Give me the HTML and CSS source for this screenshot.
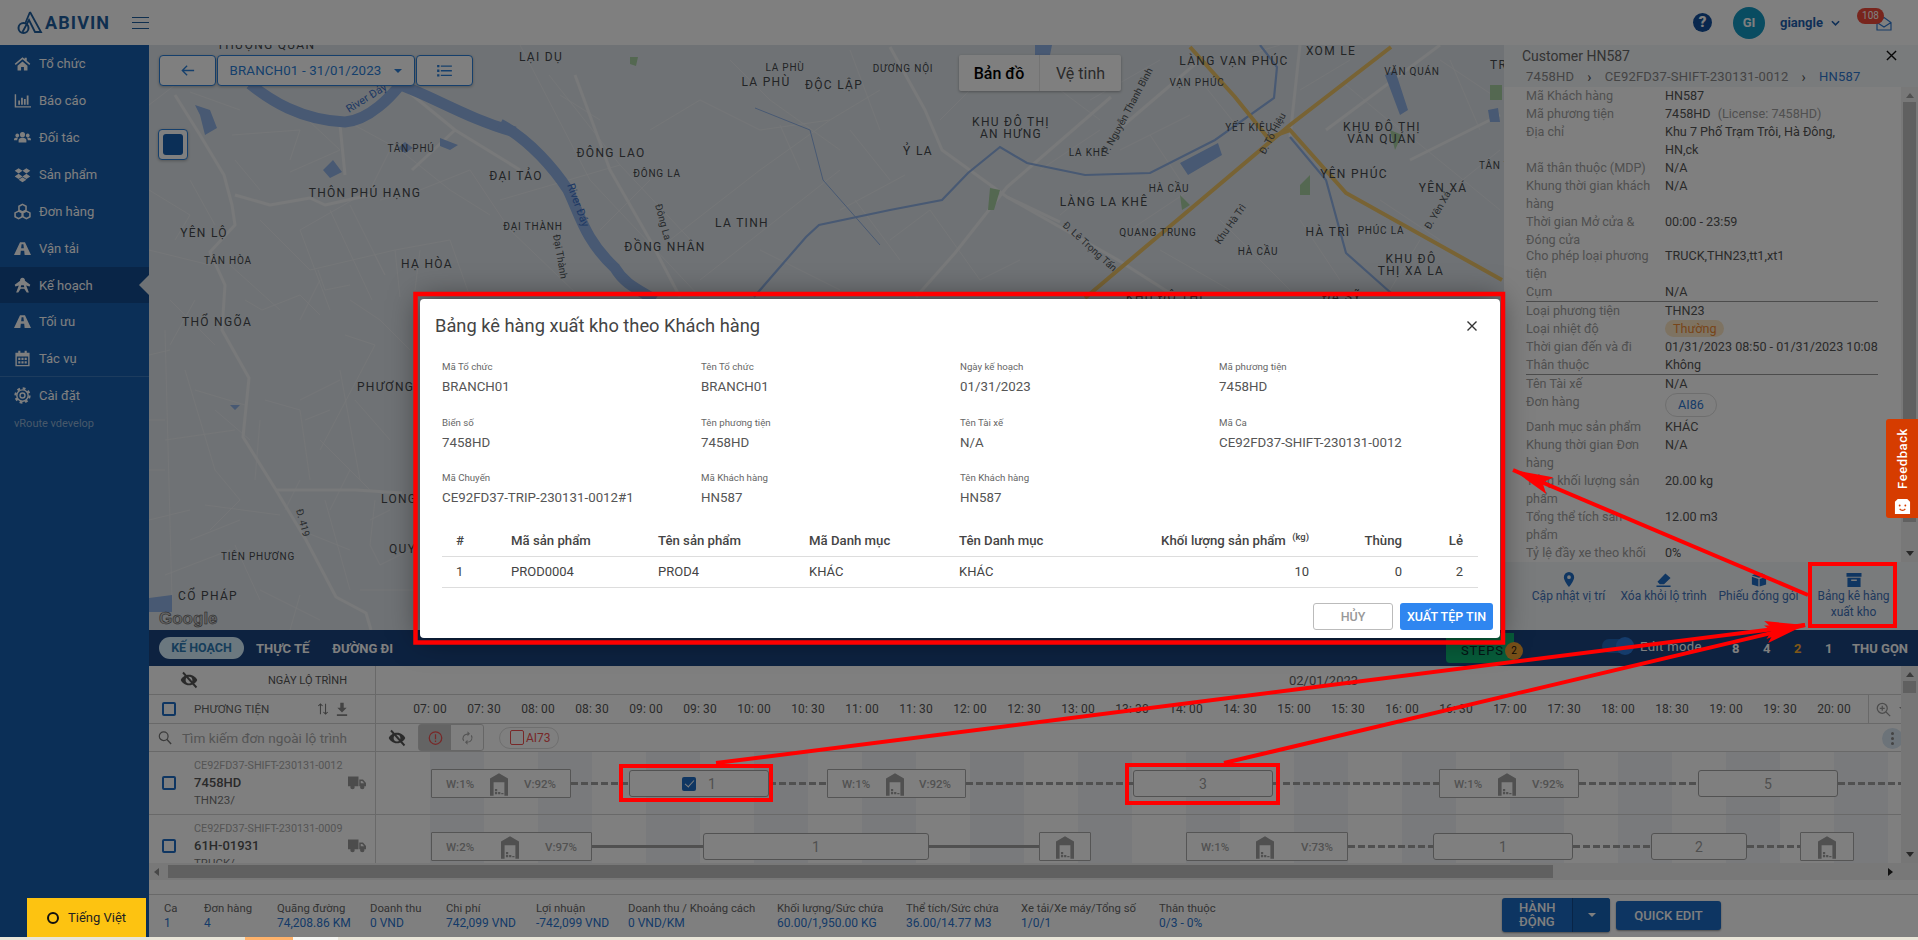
FILE: index.html
```html
<!DOCTYPE html>
<html lang="vi">
<head>
<meta charset="utf-8">
<title>ABIVIN vRoute</title>
<link rel="stylesheet" href="styles.css">
</head>
<body>
<svg class="defs" width="0" height="0" aria-hidden="true">
  <defs>
    <symbol id="i-home" viewBox="0 0 24 24"><path d="M12 3 1 12.5l1.4 1.5L12 6l9.6 8 1.4-1.5L18 8.2V4h-3v1.7zM5 15v7h5v-5h4v5h5v-7l-7-6z"/></symbol>
    <symbol id="i-chart" viewBox="0 0 24 24"><path d="M1 3h2v17h21v2H1zM6 12h2.5v6H6zM10 8h2.5v10H10zM14 10h2.5v8H14zM18 5h2.5v13H18z"/></symbol>
    <symbol id="i-users" viewBox="0 0 24 24"><circle cx="12" cy="8" r="3.6"/><circle cx="4.6" cy="9" r="2.6"/><circle cx="19.4" cy="9" r="2.6"/><path d="M6.5 19v-3c0-2.500 2-3.800 5.500-3.800s5.500 1.300 5.500 3.800v3zM0 15c0-2 1.500-3 4.500-3 .8 0 1 .2 1.300.4-.8.8-1.300 1.800-1.300 3V16H0zM24 15c0-2-1.500-3-4.500-3-.8 0-1 .2-1.300.4.800.8 1.300 1.800 1.300 3V16H24z"/></symbol>
    <symbol id="i-box" viewBox="0 0 24 24"><path d="M6.500 3 12 6.800 6.500 10.500 1 6.800zM17.500 3 23 6.800l-5.500 3.700L12 6.800zM6.500 11 12 14.700l-5.500 3.700L1 14.700zM17.500 11 23 14.700l-5.500 3.700L12 14.700zM6.500 19.500 12 16l5.500 3.500L12 23z"/></symbol>
    <symbol id="i-cubes" viewBox="0 0 24 24"><path d="M12 2 17 4.500V10l-5 2.500L7 10V4.500zM6.500 11.500l5 2.500v5.500l-5 2.500-5-2.500V14zM17.500 11.500l5 2.500v5.500l-5 2.500-5-2.500V14z" fill="none" stroke="currentColor" stroke-width="2.200"/></symbol>
    <symbol id="i-road" viewBox="0 0 24 24"><path fill-rule="evenodd" d="M8.500 3h7L24 21h-9l-.6-6H9.600L9 21H0zM10.700 6l-.6 5.500h3.800L13.300 6z"/></symbol>
    <symbol id="i-plan" viewBox="0 0 24 24"><path fill-rule="evenodd" d="M12 1a3.500 3.500 0 0 1 3.400 4.300L23 11l-1 2.500-4.800-1.600L21 22h-3l-3.500-5.500h-5L6 22H3l3.800-10.100L2 13.500 1 11l7.600-5.700A3.500 3.500 0 0 1 12 1zm-1.800 10.500-.8 3h5.200l-.8-3z"/></symbol>
    <symbol id="i-cal" viewBox="0 0 24 24"><path fill-rule="evenodd" d="M6 1h3v3h6V1h3v3h4v19H2V4h4zM4 9v12h16V9zM6 11h3v3H6zM10.500 11h3v3h-3zM15 11h3v3h-3zM6 16h3v3H6zM10.500 16h3v3h-3zM15 16h3v3h-3z"/></symbol>
    <symbol id="i-cog" viewBox="0 0 24 24"><circle cx="12" cy="12" r="8" fill="none" stroke="currentColor" stroke-width="2"/><circle cx="12" cy="12" r="10" fill="none" stroke="currentColor" stroke-width="3" stroke-dasharray="4 3.850"/><circle cx="12" cy="12" r="3.500" fill="none" stroke="currentColor" stroke-width="2"/></symbol>
    <symbol id="i-eyeoff" viewBox="0 0 24 24"><path d="M12 5C6.500 5 2.500 8.500 1 12c1.500 3.500 5.500 7 11 7s9.500-3.500 11-7c-1.500-3.500-5.500-7-11-7zm0 11.500a4.500 4.500 0 1 1 0-9 4.500 4.500 0 0 1 0 9z"/><path d="M4 2 22 22" fill="none" stroke="currentColor" stroke-width="2.500"/></symbol>
    <symbol id="i-depot" viewBox="0 0 20 26"><path fill-rule="evenodd" d="M10 1 20 7v19H0V7zM4 11v15h12V11zM5.500 18.500h2.500v2.500H5.500zM5.500 22h2.500v2.500H5.500zM9 22h2.500v2.500H9zM12.500 23h2.500v1.500h-2.500z"/></symbol>
    <symbol id="i-truck" viewBox="0 0 24 20"><path d="M0 2h14v13H0zM15 6h5l4 4.500V15h-9zM17 8v3h4.500L19 8z" fill-rule="evenodd"/><circle cx="6" cy="16" r="3"/><circle cx="19" cy="16" r="3"/></symbol>
  </defs>
</svg>

<div class="app">
  <header class="topbar">
    <div class="brand">
      <svg class="logo" viewBox="0 0 26 24"><path d="M13 1 24 21h-6L12 9 5.500 21" fill="none" stroke="currentColor" stroke-width="1.800"/><circle cx="6.500" cy="17" r="5" fill="none" stroke="currentColor" stroke-width="2"/><path d="M13 1 8 13" fill="none" stroke="currentColor" stroke-width="1.800"/></svg>
      <span class="brand-name">ABIVIN</span>
      <span class="burger"><i></i><i></i><i></i></span>
    </div>
    <div class="top-right">
      <span class="help">?</span>
      <span class="avatar">GI</span>
      <span class="username">giangle</span>
      <svg class="chev" viewBox="0 0 10 6"><path d="M1 1l4 4 4-4" fill="none" stroke="currentColor" stroke-width="1.800"/></svg>
      <span class="mail">
        <svg viewBox="0 0 16 14"><path d="M1 6l7-5 7 5v7.500H1zM1 6l7 4.500L15 6" fill="none" stroke="currentColor" stroke-width="1.200"/></svg>
        <span class="mail-badge">108</span>
      </span>
    </div>
  </header>

  <div class="shell">
    <nav class="sidebar">
      <a class="nav-item"><svg><use href="#i-home"/></svg>Tổ chức</a>
      <a class="nav-item"><svg><use href="#i-chart"/></svg>Báo cáo</a>
      <a class="nav-item"><svg><use href="#i-users"/></svg>Đối tác</a>
      <a class="nav-item"><svg><use href="#i-box"/></svg>Sản phẩm</a>
      <a class="nav-item"><svg><use href="#i-cubes"/></svg>Đơn hàng</a>
      <a class="nav-item"><svg><use href="#i-road"/></svg>Vận tải</a>
      <a class="nav-item active"><svg><use href="#i-plan"/></svg>Kế hoạch</a>
      <a class="nav-item"><svg><use href="#i-road"/></svg>Tối ưu</a>
      <a class="nav-item"><svg><use href="#i-cal"/></svg>Tác vụ</a>
      <a class="nav-item settings"><svg><use href="#i-cog"/></svg>Cài đặt</a>
      <div class="version">vRoute vdevelop</div>
    </nav>

    <main class="content">
      <section class="top-area">
        <div class="map">
          <svg class="map-art" viewBox="149 45 1355 585" preserveAspectRatio="none">
            <g class="rd-thin">
              <path d="M149 105 175 85 M190 92 240 110 M232 135 300 130 290 160 M292 105 340 150 290 172 M260 190 235 160 M345 120 400 150 450 190 490 215 M390 150 370 190 300 230 M380 200 420 190 470 170 M470 170 510 230 580 297"/>
              <path d="M300 230 330 310 M330 210 372 300 M260 220 310 270 395 250 450 240 M320 280 300 320 M395 250 400 297 M318 270 325 290 350 285 M350 205 385 275 375 255 M420 250 415 290 M450 240 470 297"/>
              <path d="M149 190 190 215 175 240 M190 180 215 225 M149 250 210 265 M230 265 280 310 M195 300 170 345 M170 300 215 345 M149 355 170 350 M165 330 172 600 M149 420 165 420 M149 470 165 470 M149 520 190 510 M165 575 230 550 M245 300 262 310 300 295 320 315"/>
              <path d="M185 370 215 470 240 500 M195 390 245 405 M215 410 250 440 M165 440 235 430 M240 500 210 530 M205 505 280 515 M190 540 240 520 M235 545 260 600 M260 590 320 620 M300 595 290 630 M260 420 255 480 M265 400 300 410 310 480 M300 400 340 380 M305 420 330 410 M320 440 370 490 M350 470 330 510 M355 400 390 440 M340 370 360 480"/>
              <path d="M350 300 380 320 410 350 M345 335 375 345 M375 345 320 450 M300 480 285 510 M300 530 350 550 M325 500 350 590 M375 500 370 545 380 565 410 550 M370 520 390 510 M360 590 413 590"/>
              <path d="M520 45 590 180 700 297 M549 75 620 165 M620 165 500 200 M620 165 700 250 M650 180 600 230 M560 95 600 120 M650 130 700 100 760 130 830 120 M830 120 760 170 670 240 M730 60 770 100 840 150 M780 125 800 170 M830 120 880 90 M850 50 880 130 M700 280 840 170 M890 180 850 130"/>
              <path d="M855 200 900 260 M840 210 905 175 M760 250 840 290 M890 240 930 210 M930 210 980 280 M980 280 1020 260 M940 120 1000 60 M1020 60 1100 120 M1040 170 1100 130 M1090 100 1160 60 M1120 150 1190 115 M1060 215 1090 190 M1130 230 1190 190 M1150 135 1180 180 M1200 80 1240 130 M1230 60 1280 45 M1300 90 1350 60 M1340 80 1400 130 M1440 60 1500 100 M1390 120 1500 210 M1450 190 1500 150 M1380 200 1440 240 M1300 220 1340 280 M1220 220 1290 290 M1160 250 1230 290 M1420 240 1390 290 M1450 60 1480 130"/>
            </g>
            <g class="rd-mid">
              <path d="M175 95 200 135 224 175 232 205 235 225 210 252 225 285 222 330 249 378 243 437 276 490 306 540 336 597 366 613 371 630"/>
              <path d="M276 490 356 490 402 493"/>
              <path d="M235 195 270 205 310 198 325 205 370 195 M340 125 345 175"/>
              <path d="M400 85 455 130 520 170 M455 130 412 170"/>
              <path d="M575 75 610 170 650 240 680 297"/>
              <path d="M890 47 925 110 942 150 1007 197 1118 260 1176 297"/>
              <path d="M1111 97 1007 187 955 253 916 297"/>
              <path d="M1007 197 1060 222 M1118 130 1200 60"/>
              <path d="M1290 137 1300 45 M1326 130 1440 45 M1410 160 1500 115"/>
            </g>
            <g class="water">
              <path class="w-band" d="M250 84 C270 100 300 120 345 122 C370 120 392 95 400 85 C430 95 470 120 515 132"/>
              <path class="w-band" d="M500 124 C530 140 555 170 568 190 C580 215 585 240 615 268 C625 285 640 290 655 300"/>
              <path class="w-thin" d="M754 297 806 237 819 225 890 210 942 200 968 173 1000 147 1027 163 1085 175 1150 173 1215 140 1274 98 1277 67 1260 45"/>
              <path class="w-thin" d="M1290 137 1326 180 1346 253 1391 293"/>
              <path class="w-hair" d="M755 108 810 130 823 180 880 245"/>
              <path class="w-fill" d="M195 105 210 110 217 128 205 135 200 115zM333 160 342 172 330 178 323 170zM405 142 413 148 405 153 398 148zM440 138 458 145 450 150 440 146zM1180 163 1218 143 1222 155 1188 175zM1385 75 1395 70 1408 110 1400 115zM1488 110 1498 108 1500 122 1490 122zM1035 45 1052 45 1050 55 1035 55zM149 598 172 595 172 612 149 612zM230 405 240 405 235 410z"/>
            </g>
            <g class="parks"><path d="M630 57 638 57 636 66 630 64zM990 188 1000 190 994 210 988 210zM1180 195 1190 205 1182 210zM1300 185 1310 175 1310 195 1300 195zM1390 130 1402 135 1395 150zM1490 85 1502 85 1502 100 1490 100z"/></g>
            <g class="hwy">
              <path d="M1391 47 1290 125 1085 298"/>
              <path d="M1190 47 1235 97 1268 138 1290 130 1346 193 1502 280"/>
            </g>
            <g class="lbl-lg">
              <text x="266" y="49" text-anchor="middle">THƯỢNG QUẢN</text>
              <text x="365" y="197" text-anchor="middle">THÔN PHÚ HẠNG</text>
              <text x="204" y="237" text-anchor="middle">YÊN LỘ</text>
              <text x="427" y="268" text-anchor="middle">HẠ HÒA</text>
              <text x="217" y="326" text-anchor="middle">THỔ NGÕA</text>
              <text x="357" y="391">PHƯƠNG</text>
              <text x="381" y="503">LONG</text>
              <text x="389" y="553">QUY</text>
              <text x="208" y="600" text-anchor="middle">CỔ PHÁP</text>
              <text x="541" y="61" text-anchor="middle">LẠI DỤ</text>
              <text x="766" y="86" text-anchor="middle">LA PHÙ</text>
              <text x="834" y="89" text-anchor="middle">ĐỘC LẬP</text>
              <text x="1234" y="65" text-anchor="middle">LÀNG VẠN PHÚC</text>
              <text x="1331" y="55" text-anchor="middle">XÓM LE</text>
              <text x="1011" y="126" text-anchor="middle">KHU ĐÔ THỊ</text>
              <text x="1011" y="138" text-anchor="middle">AN HƯNG</text>
              <text x="1382" y="131" text-anchor="middle">KHU ĐÔ THỊ</text>
              <text x="1382" y="143" text-anchor="middle">VĂN QUÁN</text>
              <text x="918" y="155" text-anchor="middle">Ỷ LA</text>
              <text x="611" y="157" text-anchor="middle">ĐÔNG LAO</text>
              <text x="516" y="180" text-anchor="middle">ĐẠI TẢO</text>
              <text x="1354" y="178" text-anchor="middle">YÊN PHÚC</text>
              <text x="1443" y="192" text-anchor="middle">YÊN XÁ</text>
              <text x="1104" y="206" text-anchor="middle">LÀNG LA KHÊ</text>
              <text x="1328" y="236" text-anchor="middle">HÀ TRÌ</text>
              <text x="742" y="227" text-anchor="middle">LA TINH</text>
              <text x="665" y="251" text-anchor="middle">ĐỒNG NHÂN</text>
              <text x="1411" y="263" text-anchor="middle">KHU ĐÔ</text>
              <text x="1411" y="275" text-anchor="middle">THỊ XA LA</text>
              <text x="1490" y="69">TRI</text>
              <text x="1165" y="301" text-anchor="middle">KHU ĐÔ THỊ</text>
              <text x="1342" y="301" text-anchor="middle">ĐA SỸ</text>
            </g>
            <g class="lbl-sm">
              <text x="411" y="152" text-anchor="middle">TÂN PHÚ</text>
              <text x="228" y="264" text-anchor="middle">TÂN HÒA</text>
              <text x="258" y="560" text-anchor="middle">TIÊN PHƯƠNG</text>
              <text x="533" y="230" text-anchor="middle">ĐẠI THÀNH</text>
              <text x="785" y="71" text-anchor="middle">LA PHÙ</text>
              <text x="903" y="72" text-anchor="middle">DƯƠNG NỘI</text>
              <text x="1197" y="86" text-anchor="middle">VẠN PHÚC</text>
              <text x="1412" y="75" text-anchor="middle">VĂN QUÁN</text>
              <text x="1249" y="131" text-anchor="middle">YẾT KIÊU</text>
              <text x="1088" y="156" text-anchor="middle">LA KHÊ</text>
              <text x="657" y="177" text-anchor="middle">ĐÔNG LA</text>
              <text x="1479" y="169">TÂN T</text>
              <text x="1169" y="192" text-anchor="middle">HÀ CẦU</text>
              <text x="1158" y="236" text-anchor="middle">QUANG TRUNG</text>
              <text x="1381" y="234" text-anchor="middle">PHÚC LA</text>
              <text x="1258" y="255" text-anchor="middle">HÀ CẦU</text>
            </g>
            <g class="lbl-road">
              <text transform="translate(1062 226) rotate(42)">Đ. Lê Trọng Tấn</text>
              <text transform="translate(1265 155) rotate(-62)">Đ. Tố Hiệu</text>
              <text transform="translate(1220 245) rotate(-55)">Khu Hà Trì</text>
              <text transform="translate(1430 230) rotate(-60)">Đ. Yên Xá</text>
              <text transform="translate(553 235) rotate(80)">Đại Thành</text>
              <text transform="translate(655 205) rotate(75)">Đông La</text>
              <text transform="translate(1108 155) rotate(-62)">P. Nguyễn Thanh Bình</text>
              <text transform="translate(296 510) rotate(75)">Đ. 419</text>
            </g>
            <g class="lbl-river">
              <text transform="translate(349 113) rotate(-32)">River Đáy</text>
              <text transform="translate(567 185) rotate(70)">River Đáy</text>
            </g>
            <text class="google" x="159" y="624">Google</text>
          </svg>

          <div class="map-tools">
            <button class="tool tool-back"><svg viewBox="0 0 16 14"><path d="M15 7H2M7 1.500 1.500 7 7 12.500" fill="none" stroke="currentColor" stroke-width="1.500"/></svg></button>
            <button class="tool tool-date">BRANCH01 - 31/01/2023<i class="caret"></i></button>
            <button class="tool tool-list"><svg viewBox="0 0 16 13"><path d="M0 0h2.500v2.500H0zM4 .5h12v1.500H4zM0 5h2.500v2.500H0zM4 5.500h12V7H4zM0 10h2.500v2.500H0zM4 10.500h12V12H4z"/></svg></button>
          </div>
          <div class="map-square"><span></span></div>
          <div class="map-type"><span class="on">Bản đồ</span><span>Vệ tinh</span></div>
        </div>

        <aside class="panel">
          <div class="panel-title"><span>Customer HN587</span>
            <svg viewBox="0 0 12 12"><path d="M1 1l10 10M11 1 1 11" fill="none" stroke="currentColor" stroke-width="1.500"/></svg></div>
          <div class="crumbs"><span>7458HD</span><b>›</b><span>CE92FD37-SHIFT-230131-0012</span><b>›</b><span class="cur">HN587</span></div>
          <div class="panel-body">
            <div class="panel-scroll">
              <dl class="info">
                <dt>Mã Khách hàng</dt><dd>HN587</dd>
                <dt>Mã phương tiện</dt><dd>7458HD <span class="muted">(License: 7458HD)</span></dd>
                <dt>Địa chỉ</dt><dd class="addr">Khu 7 Phố Trạm Trôi, Hà Đông, HN,ck</dd>
                <dt>Mã thân thuộc (MDP)</dt><dd>N/A</dd>
                <dt>Khung thời gian khách hàng</dt><dd>N/A</dd>
                <dt class="tight">Thời gian Mở cửa &amp; Đóng cửa</dt><dd class="tight">00:00 - 23:59</dd>
                <dt>Cho phép loại phương tiện</dt><dd>TRUCK,THN23,tt1,xt1</dd>
                <dt>Cụm</dt><dd>N/A</dd>
              </dl>
              <hr class="sep">
              <dl class="info">
                <dt>Loại phương tiện</dt><dd>THN23</dd>
                <dt>Loại nhiệt độ</dt><dd><span class="pill-temp">Thường</span></dd>
                <dt>Thời gian đến và đi</dt><dd>01/31/2023 08:50 - 01/31/2023 10:08</dd>
                <dt>Thân thuộc</dt><dd>Không</dd>
              </dl>
              <hr class="sep">
              <dl class="info">
                <dt>Tên Tài xế</dt><dd>N/A</dd>
                <dt>Đơn hàng</dt><dd class="order-cell"><span class="pill-order">AI86</span></dd>
                <dt>Danh mục sản phẩm</dt><dd>KHÁC</dd>
                <dt>Khung thời gian Đơn hàng</dt><dd>N/A</dd>
                <dt>Tổng khối lượng sản phẩm</dt><dd>20.00 kg</dd>
                <dt>Tổng thể tích sản phẩm</dt><dd>12.00 m3</dd>
                <dt>Tỷ lệ đầy xe theo khối</dt><dd>0%</dd>
              </dl>
            </div>
            <div class="vbar"><i class="up"></i><span class="thumb"></span><i class="down"></i></div>
          </div>
          <div class="panel-actions">
            <a class="act"><svg viewBox="0 0 14 16"><path fill-rule="evenodd" d="M7 0a5.500 5.500 0 0 1 5.500 5.500C12.500 9.500 7 16 7 16S1.500 9.500 1.500 5.500A5.500 5.500 0 0 1 7 0zm0 3.500a2 2 0 1 0 0 4 2 2 0 0 0 0-4z"/></svg>Cập nhật vị trí</a>
            <a class="act"><svg viewBox="0 0 16 16"><path d="M9.500 1.500 15 6.500 8 13H3.500L1 10.500zM0 14.500h15V16H0z"/></svg>Xóa khỏi lộ trình</a>
            <a class="act"><svg viewBox="0 0 18 16"><path d="M9 6 1 3.500 6 1l3 2 3-2 5 2.500zM1 5l7.300 2.300V16L1 13.500zM17 5 9.700 7.300V16l7.300-2.500z"/></svg>Phiếu đóng gói</a>
            <a class="act"><svg viewBox="0 0 16 16"><path fill-rule="evenodd" d="M0 1h16v4H0zM1 6h14v10H1zM5 8v1.500h6V8z"/></svg>Bảng kê hàng xuất kho</a>
          </div>
        </aside>
      </section>

      <section class="tabbar">
        <span class="tab active">KẾ HOẠCH</span>
        <span class="tab">THỰC TẾ</span>
        <span class="tab">ĐƯỜNG ĐI</span>
        <div class="tab-right">
          <span class="steps">STEPS<b>2</b></span>
          <span class="switch"><i></i></span>
          <span class="edit">Edit mode</span>
          <span class="zoom-n">8</span><span class="zoom-n">4</span><span class="zoom-n cur">2</span><span class="zoom-n">1</span>
          <span class="collapse">THU GỌN</span>
        </div>
      </section>

      <section class="timeline">
        <div class="tl-main">
          <div class="tl-rows">
            <div class="tl-row r-date">
              <div class="cell-left date-left"><svg class="ic-eye"><use href="#i-eyeoff"/></svg><span>NGÀY LỘ TRÌNH</span></div>
              <div class="cell-right date-right">02/01/2023</div>
            </div>
            <div class="tl-row r-time">
              <div class="cell-left veh-head"><i class="check"></i><span>PHƯƠNG TIỆN</span>
                <svg class="ic-sort" viewBox="0 0 14 16"><path d="M4 14V2M1.500 4.500 4 2l2.500 2.500M10 2v12M7.500 11.500 10 14l2.500-2.500" fill="none" stroke="currentColor" stroke-width="1.200"/></svg>
                <svg class="ic-dl" viewBox="0 0 14 16"><path d="M5 0h4v6h3.500L7 11.500 1.500 6H5zM1 13.500h12V15.500H1z"/></svg>
              </div>
              <div class="cell-right times">
                <span>07: 00</span><span>07: 30</span><span>08: 00</span><span>08: 30</span><span>09: 00</span><span>09: 30</span><span>10: 00</span><span>10: 30</span><span>11: 00</span><span>11: 30</span><span>12: 00</span><span>12: 30</span><span>13: 00</span><span>13: 30</span><span>14: 00</span><span>14: 30</span><span>15: 00</span><span>15: 30</span><span>16: 00</span><span>16: 30</span><span>17: 00</span><span>17: 30</span><span>18: 00</span><span>18: 30</span><span>19: 00</span><span>19: 30</span><span>20: 00</span>
                <div class="zoom-box"><svg viewBox="0 0 18 18"><circle cx="7.500" cy="7.500" r="6" fill="none" stroke="currentColor" stroke-width="1.500"/><path d="M7.500 4.500v6M4.500 7.500h6M12 12l5 5" fill="none" stroke="currentColor" stroke-width="1.500"/></svg><i class="caret"></i></div>
              </div>
            </div>
            <div class="tl-row r-search">
              <div class="cell-left search"><svg viewBox="0 0 16 16"><circle cx="6.500" cy="6.500" r="5" fill="none" stroke="currentColor" stroke-width="1.400"/><path d="M10 10l5 5.500" fill="none" stroke="currentColor" stroke-width="1.600"/></svg><span>Tìm kiếm đơn ngoài lộ trình</span></div>
              <div class="cell-right tools-row">
                <svg class="ic-eye"><use href="#i-eyeoff"/></svg>
                <div class="seg">
                  <span class="seg-on"><svg viewBox="0 0 18 18"><circle cx="9" cy="9" r="7.500" fill="none" stroke="currentColor" stroke-width="1.500"/><path d="M9 4.500v6M9 12v1.800" fill="none" stroke="currentColor" stroke-width="1.500"/></svg></span>
                  <span><svg viewBox="0 0 18 18"><path d="M4 13A6 6 0 0 1 9 3.500V1l3 3-3 3V5A4.500 4.500 0 0 0 5 12zM14 5a6 6 0 0 1-5 9.500V17l-3-3 3-3v2.500a4.500 4.500 0 0 0 4-7z"/></svg></span>
                </div>
                <span class="chip"><i></i>AI73</span>
                <span class="dots"><i></i><i></i><i></i></span>
              </div>
            </div>

            <div class="tl-row r-veh r1">
              <div class="cell-left veh"><i class="check"></i>
                <div class="veh-text"><small>CE92FD37-SHIFT-230131-0012</small><strong>7458HD</strong><small class="sub">THN23/</small></div>
                <svg class="truck"><use href="#i-truck"/></svg>
              </div>
              <div class="cell-right track">
                <div class="depot" style="width:140px"><span>W:1%</span><svg><use href="#i-depot"/></svg><span>V:92%</span></div>
                <i class="link dash" style="width:58px"></i>
                <div class="stop" style="width:140px"><i class="tick"></i>1</div>
                <i class="link dash" style="width:58px"></i>
                <div class="depot" style="width:139px"><span>W:1%</span><svg><use href="#i-depot"/></svg><span>V:92%</span></div>
                <i class="link dash" style="width:167px"></i>
                <div class="stop" style="width:140px">3</div>
                <i class="link dash" style="width:166px"></i>
                <div class="depot" style="width:140px"><span>W:1%</span><svg><use href="#i-depot"/></svg><span>V:92%</span></div>
                <i class="link dash" style="width:119px"></i>
                <div class="stop" style="width:140px">5</div>
                <i class="link dash" style="width:63px"></i>
              </div>
            </div>
            <div class="tl-row r-veh r2">
              <div class="cell-left veh"><i class="check"></i>
                <div class="veh-text"><small>CE92FD37-SHIFT-230131-0009</small><strong>61H-01931</strong><small class="sub">TRUCK/</small></div>
                <svg class="truck"><use href="#i-truck"/></svg>
              </div>
              <div class="cell-right track">
                <div class="depot" style="width:161px"><span>W:2%</span><svg><use href="#i-depot"/></svg><span>V:97%</span></div>
                <i class="link solid" style="width:111px"></i>
                <div class="stop" style="width:226px">1</div>
                <i class="link solid" style="width:110px"></i>
                <div class="depot only" style="width:52px"><svg><use href="#i-depot"/></svg></div>
                <i class="link none" style="width:95px"></i>
                <div class="depot" style="width:162px"><span>W:1%</span><svg><use href="#i-depot"/></svg><span>V:73%</span></div>
                <i class="link dash" style="width:85px"></i>
                <div class="stop" style="width:140px">1</div>
                <i class="link dash" style="width:78px"></i>
                <div class="stop" style="width:96px">2</div>
                <i class="link dash" style="width:53px"></i>
                <div class="depot only" style="width:54px"><svg><use href="#i-depot"/></svg></div>
              </div>
            </div>
          </div>
          <div class="vbar vbar-tl"><i class="up"></i><span class="thumb"></span><i class="spacer"></i><i class="down"></i></div>
        </div>
        <div class="hbar"><i class="left"></i><span class="thumb"></span><i class="right"></i></div>
      </section>

      <section class="summary">
        <div class="stats">
          <div><span>Ca</span><b>1</b></div>
          <div><span>Đơn hàng</span><b>4</b></div>
          <div><span>Quãng đường</span><b>74,208.86 KM</b></div>
          <div><span>Doanh thu</span><b>0 VND</b></div>
          <div><span>Chi phí</span><b>742,099 VND</b></div>
          <div><span>Lợi nhuận</span><b>-742,099 VND</b></div>
          <div><span>Doanh thu / Khoảng cách</span><b>0 VND/KM</b></div>
          <div><span>Khối lượng/Sức chứa</span><b>60.00/1,950.00 KG</b></div>
          <div><span>Thể tích/Sức chứa</span><b>36.00/14.77 M3</b></div>
          <div><span>Xe tải/Xe máy/Tổng số</span><b>1/0/1</b></div>
          <div><span>Thân thuộc</span><b>0/3 - 0%</b></div>
        </div>
        <div class="actions">
          <div class="split"><span class="split-main">HÀNH ĐỘNG</span><span class="split-drop"><i class="caret"></i></span></div>
          <button class="quick">QUICK EDIT</button>
        </div>
      </section>
    </main>
  </div>
</div>

<div class="bottom-strip"><span class="s-orange"></span><span class="s-white"></span></div>

<div class="mask"></div>

<div class="lang"><i></i>Tiếng Việt</div>
<div class="feedback"><span>Feedback</span><svg viewBox="0 0 18 18"><path d="M1 4 4 1h10l3 3v13H1z"/><circle cx="6" cy="8" r="1" fill="#d63c00"/><circle cx="12" cy="8" r="1" fill="#d63c00"/><path d="M6 11.500c1.500 2 4.500 2 6 0" fill="none" stroke="#d63c00" stroke-width="1.300"/></svg></div>

<section class="modal" role="dialog">
  <div class="modal-head"><h2>Bảng kê hàng xuất kho theo Khách hàng</h2>
    <svg viewBox="0 0 12 12"><path d="M1.500 1.500l9 9M10.500 1.500l-9 9" fill="none" stroke="currentColor" stroke-width="1.400"/></svg></div>
  <div class="fields">
    <div><label>Mã Tổ chức</label><p>BRANCH01</p></div>
    <div><label>Tên Tổ chức</label><p>BRANCH01</p></div>
    <div><label>Ngày kế hoạch</label><p>01/31/2023</p></div>
    <div><label>Mã phương tiện</label><p>7458HD</p></div>
    <div><label>Biển số</label><p>7458HD</p></div>
    <div><label>Tên phương tiện</label><p>7458HD</p></div>
    <div><label>Tên Tài xế</label><p>N/A</p></div>
    <div><label>Mã Ca</label><p>CE92FD37-SHIFT-230131-0012</p></div>
    <div><label>Mã Chuyến</label><p>CE92FD37-TRIP-230131-0012#1</p></div>
    <div><label>Mã Khách hàng</label><p>HN587</p></div>
    <div><label>Tên Khách hàng</label><p>HN587</p></div>
  </div>
  <table class="items">
    <colgroup><col class="c1"><col class="c2"><col class="c3"><col class="c4"><col class="c5"><col class="c6"><col class="c7"><col class="c8"></colgroup>
    <thead><tr><th class="idx">#</th><th>Mã sản phẩm</th><th>Tên sản phẩm</th><th>Mã Danh mục</th><th>Tên Danh mục</th><th class="num">Khối lượng sản phẩm <sup>(kg)</sup></th><th class="num">Thùng</th><th class="num last">Lẻ</th></tr></thead>
    <tbody><tr><td class="idx">1</td><td>PROD0004</td><td>PROD4</td><td>KHÁC</td><td>KHÁC</td><td class="num">10</td><td class="num">0</td><td class="num last">2</td></tr></tbody>
  </table>
  <div class="modal-foot"><button class="btn-cancel">HỦY</button><button class="btn-export">XUẤT TỆP TIN</button></div>
</section>

<svg class="notes" viewBox="0 0 1918 940" aria-hidden="true">
  <defs>
    <marker id="head" markerUnits="userSpaceOnUse" markerWidth="40" markerHeight="18" refX="40" refY="9" orient="auto"><path d="M0 0 40 9 0 18 8 9z" fill="#f00"/></marker>
  </defs>
  <g fill="none" stroke="#f00">
    <rect x="415.500" y="294" width="1087.500" height="348.500" stroke-width="4.500"/>
    <rect x="621" y="766" width="150" height="34" stroke-width="4"/>
    <rect x="1127" y="765" width="151" height="38" stroke-width="4"/>
    <rect x="1810" y="564" width="85" height="62" stroke-width="4"/>
    <path d="M1808 595 1513 470" stroke-width="4" marker-end="url(#head)"/>
    <path d="M716 763 1805 625" stroke-width="4" marker-end="url(#head)"/>
    <path d="M1224 763 1805 625" stroke-width="4" marker-end="url(#head)"/>
  </g>
</svg>
</body>
</html>
```
FILE: styles.css
```css
* { box-sizing: border-box; }
html, body { margin: 0; padding: 0; }
body {
  width: 1918px;
  height: 940px;
  overflow: hidden;
  position: relative;
  background: #e9e5d8;
  font-family: Roboto, "Noto Sans", "Liberation Sans", sans-serif;
  font-size: 13px;
  color: #555;
}
.defs { position: absolute; }
i { font-style: normal; display: block; }
button { font-family: inherit; cursor: pointer; }
dl, dd, dt, h2, p { margin: 0; }

/* ---------- frame ---------- */
.app { height: 937px; display: flex; flex-direction: column; background: #fff; overflow: hidden; }
.topbar { height: 45px; flex: none; display: flex; align-items: center; justify-content: space-between; background: #fff; }
.brand { display: flex; align-items: center; padding-left: 17px; color: #1f5f9f; }
.logo { width: 26px; height: 24px; margin-top: 1px; }
.brand-name { font-size: 18px; font-weight: 700; letter-spacing: 1.1px; margin-left: 2px; width: 87px; }
.burger { display: flex; flex-direction: column; gap: 4.500px; width: 17px; }
.burger i { height: 1px; background: #1f5f9f; }
.top-right { display: flex; align-items: center; }
.help { width: 19px; height: 19px; border-radius: 50%; background: #134f9c; color: #fff; font-size: 15px; font-weight: 900; text-align: center; line-height: 19px; margin-right: 21px; }
.avatar { width: 32px; height: 32px; border-radius: 50%; background: #1398c2; color: #fff; font-weight: 700; font-size: 13px; text-align: center; line-height: 32px; margin-right: 15px; }
.username { font-weight: 700; color: #1f5fae; font-size: 13px; margin-right: 8px; }
.chev { width: 9px; height: 6px; color: #1f5fae; margin-right: 17px; }
.mail { width: 61px; height: 32px; position: relative; display: block; color: #2f78d0; }
.mail svg { position: absolute; left: 19px; top: 9px; width: 16px; height: 15px; }
.mail-badge { position: absolute; left: 0; top: 1px; width: 27px; height: 16px; border-radius: 8px; background: #f04a3a; color: #fff; font-size: 10px; text-align: center; line-height: 16px; }

.shell { flex: 1; display: flex; min-height: 0; }

/* ---------- sidebar ---------- */
.sidebar { width: 149px; flex: none; background: #165eae; }
.nav-item { height: 37px; display: flex; align-items: center; gap: 8px; padding-left: 14px; color: #fff; font-size: 13px; position: relative; }
.nav-item svg { width: 17px; height: 17px; fill: currentColor; color: #fff; flex: none; }
.nav-item.active { background: #124a8e; height: 36px; }
.nav-item.active::after { content: ""; position: absolute; right: 0; top: 8px; border: 10px solid transparent; border-left: 0; border-right-color: #dfe5ea; }
.settings { border-top: 1px solid #3a78bd; margin-top: -1px; }
.version { color: #8fb0d4; font-size: 11px; font-weight: 400; padding: 4px 0 0 14px; }

.content { flex: 1; min-width: 0; display: flex; flex-direction: column; }

/* ---------- map ---------- */
.top-area { height: 585px; flex: none; display: flex; }
.map { width: 1355px; flex: none; position: relative; background: #dfe5ea; overflow: hidden; }
.map-art { position: absolute; left: 0; top: 0; width: 1355px; height: 585px; }
.map-art g { fill: none; }
.rd-thin path { stroke: #eceff2; stroke-width: .8; fill: none; stroke-linejoin: round; }
.rd-mid path { stroke: #f0f2f4; stroke-width: 3; fill: none; stroke-linejoin: round; }
.water .w-band { stroke: #90b2e6; stroke-width: 11; fill: none; }
.water .w-thin { stroke: #90b2e6; stroke-width: 2.200; fill: none; }
.water .w-hair { stroke: #90b2e6; stroke-width: 1; fill: none; }
.water .w-fill { fill: #90b2e6; }
.parks path { fill: #a8d0a2; }
.hwy path { stroke: #f0c668; stroke-width: 4; fill: none; }
.lbl-lg text, .lbl-sm text { fill: #45494d; font-family: Roboto, sans-serif; font-weight: 400; letter-spacing: 1.300px; }
.lbl-lg text { font-size: 12px; }
.lbl-sm text { font-size: 10px; letter-spacing: .8px; }
.lbl-road text { fill: #50565a; font-size: 10px; font-family: Roboto, sans-serif; }
.lbl-river text { fill: #3a70c8; font-size: 11px; font-family: Roboto, sans-serif; }
.google { font-family: "Liberation Sans", sans-serif; font-size: 17px; font-weight: 700; fill: #c8c8c8; stroke: #444; stroke-width: .5; }

.map-tools { position: absolute; left: 10px; top: 10px; display: flex; gap: 1px; }
.tool { height: 31px; border: 1px solid #2a7fd8; border-radius: 4px; background: #fff; color: #2a7fd8; padding: 0; display: flex; align-items: center; justify-content: center; box-shadow: 0 1px 3px rgba(0,0,0,.25); }
.tool-back { width: 57px; }
.tool-back svg { width: 14px; height: 13px; }
.tool-date { width: 198px; font-size: 13.300px; gap: 13px; font-weight: 400; letter-spacing: .15px; }
.tool-list { width: 57px; }
.tool-list svg { width: 15px; height: 12px; fill: currentColor; }
.caret { width: 0; height: 0; border: 4px solid transparent; border-top-color: currentColor; border-bottom: 0; }
.map-square { position: absolute; left: 9px; top: 84px; width: 30px; height: 31px; border: 1px solid #2a7fd8; border-radius: 4px; background: #fff; padding: 4px; box-shadow: 0 1px 3px rgba(0,0,0,.25); }
.map-square span { display: block; width: 100%; height: 100%; background: #165eae; border-radius: 3px; }
.map-type { position: absolute; left: 810px; top: 10px; height: 36px; width: 162px; display: flex; background: #fff; font-size: 16px; box-shadow: 0 1px 3px rgba(0,0,0,.3); border-radius: 2px; }
.map-type span { flex: 1; display: flex; align-items: center; justify-content: center; color: #565656; }
.map-type .on { color: #000; font-weight: 500; border-right: 1px solid #e6e6e6; flex: 0 0 81px; }

/* ---------- side panel ---------- */
.panel { flex: 1; background: #f3f6f9; display: flex; flex-direction: column; min-width: 0; }
.panel-title { height: 21px; padding: 0 21px 0 18px; display: flex; align-items: center; justify-content: space-between; font-size: 14px; color: #666; margin-top: 0; }
.panel-title svg { width: 11px; height: 11px; color: #111; }
.crumbs { height: 21px; padding-left: 22px; display: flex; align-items: center; gap: 13px; font-size: 13px; color: #888; letter-spacing: .2px; }
.crumbs b { font-weight: 400; color: #555; font-size: 14px; }
.crumbs .cur { color: #2f78d0; }
.panel-body { height: 475px; flex: none; display: flex; background: #fff; overflow: hidden; }
.panel-scroll { flex: 1; min-width: 0; padding: 0 23px 0 22px; overflow: hidden; }
.info { display: grid; grid-template-columns: 139px 1fr; line-height: 18px; font-size: 12.600px; }
.info dt { color: #a0a0a0; padding-right: 11px; }
.info dd { color: #555; }
.info .addr { max-width: 190px; }
.info .tight { margin-bottom: -1px; line-height: 17.500px; }
.muted { color: #a0a0a0; margin-left: 4px; }
.sep { border: 0; border-top: 1px solid #999; margin: 0; }
.pill-temp { display: inline-block; height: 17px; line-height: 17px; padding: 0 8px; border-radius: 9px; background: #fce6c4; color: #ef8a35; }
.order-cell { height: 25px; }
.pill-order { display: inline-block; height: 24px; line-height: 22px; padding: 0 12px; border-radius: 12px; border: 1px solid #ddd; color: #2f78d0; }
.vbar { width: 17px; flex: none; display: flex; flex-direction: column; align-items: center; background: #f1f1f1; }
.vbar .up, .vbar .down { width: 0; height: 0; border: 4px solid transparent; margin: 4px 0; }
.vbar .up { border-bottom: 5px solid #a0a0a0; border-top: 0; margin-top: 6px; }
.vbar .down { border-top: 5px solid #505050; border-bottom: 0; margin-top: auto; margin-bottom: 6px; }
.vbar .thumb { width: 13px; height: 420px; background: #c1c1c1; }
.panel-actions { flex: 1; display: flex; padding: 10px 0 0 17px; background: #f3f6f9; }
.act { width: 95px; flex: none; display: flex; flex-direction: column; align-items: center; text-align: center; font-size: 12px; line-height: 16px; color: #3f73b8; }
.act svg { width: 16px; height: 15px; fill: #1e6cc4; margin-bottom: 1px; }

/* ---------- tabs ---------- */
.tabbar { height: 36px; flex: none; display: flex; align-items: center; background: #1a4480; padding-left: 10px; color: #fff; font-weight: 700; font-size: 13px; }
.tab { margin-right: 11px; padding: 0 1px; }
.tab + .tab { margin-right: 21px; }
.tab.active { width: 85px; height: 22px; line-height: 22px; border-radius: 11px; background: #d7f0ff; color: #2d7bb5; text-align: center; font-size: 12.500px; }
.tab-right { margin-left: auto; display: flex; align-items: center; }
.steps { width: 68px; height: 30px; margin: 0 91px 0 0; padding: 11px 0 0 15px; line-height: 14px; background: #0eb874; color: #0a2a2a; border-radius: 0 0 4px 4px; font-weight: 400; font-size: 13px; position: relative; align-self: flex-start; letter-spacing: .8px; }
.steps b { position: absolute; right: -9px; top: 9px; width: 18px; height: 18px; border-radius: 50%; background: #f0a030; color: #111; font-size: 10px; font-weight: 400; line-height: 18px; text-align: center; letter-spacing: 0; }
.switch { width: 32px; height: 14px; background: #1f66b8; border-radius: 7px; position: relative; margin: -4px 6px 0 -3px; }
.switch i { position: absolute; right: 0; top: -2px; width: 18px; height: 18px; border-radius: 50%; background: #2a78d8; }
.edit { font-weight: 400; font-size: 13px; width: 92px; letter-spacing: .4px; margin-top: -4px; }
.zoom-n { width: 31px; font-size: 13px; }
.zoom-n.cur { color: #ffb030; }
.collapse { font-size: 13px; width: 66px; margin-left: -4px; }

/* ---------- timeline ---------- */
.timeline { height: 214px; flex: none; display: flex; flex-direction: column; background: #fff; }
.tl-main { height: 197px; flex: none; display: flex; }
.tl-rows { flex: 1; min-width: 0; }
.tl-row { display: flex; border-bottom: 1px solid #d2d2d2; overflow: hidden; }
.cell-left { width: 227px; flex: none; border-right: 1px solid #d2d2d2; display: flex; align-items: center; }
.cell-right { flex: 1; min-width: 0; display: flex; align-items: center; }
.r-date { height: 29px; }
.r-time { height: 29px; }
.r-search { height: 28px; }
.r-veh.r1 { height: 63px; }
.r-veh.r2 { height: 48px; border-bottom: 0; }
.ic-eye { width: 18px; height: 18px; fill: currentColor; color: #555; flex: none; }
.date-left { padding-left: 31px; color: #555; font-size: 11px; }
.date-left span { margin-left: 70px; white-space: nowrap; }
.date-right { justify-content: center; color: #666; font-size: 13px; padding-left: 370px; letter-spacing: 0; }
.check { width: 14px; height: 14px; border: 2px solid #1e6cc4; border-radius: 2px; flex: none; background: #fff; }
.veh-head { padding-left: 13px; color: #666; font-size: 11.600px; }
.veh-head span { margin-left: 18px; width: 123px; }
.ic-sort { width: 12px; height: 16px; color: #777; }
.ic-dl { width: 12px; height: 15px; fill: #888; margin-left: 7px; }
.times { padding-left: 27px; font-size: 12px; color: #555; letter-spacing: .1px; }
.times > span { width: 54px; flex: none; text-align: center; white-space: pre; }
.zoom-box { margin-left: 7px; width: 32px; height: 100%; border-left: 1px solid #d2d2d2; display: flex; align-items: center; gap: 8px; padding-left: 7px; color: #999; }
.zoom-box svg { width: 15px; height: 15px; flex: none; }
.search { padding-left: 9px; color: #777; }
.search svg { width: 14px; height: 15px; flex: none; }
.search span { margin-left: 10px; color: #aaa; font-size: 13.600px; white-space: nowrap; }
.tools-row { position: relative; padding-left: 12px; }
.seg { margin-left: 12px; display: flex; width: 66px; height: 27px; border: 1px solid #ccc; border-radius: 3px; }
.seg span { flex: 1; display: flex; align-items: center; justify-content: center; color: #aaa; }
.seg svg { width: 15px; height: 16px; fill: currentColor; }
.seg .seg-on { background: #c8c8c8; color: #f05050; }
.seg .seg-on svg { fill: none; }
.chip { margin-left: 15px; display: flex; align-items: center; gap: 2px; width: 60px; height: 22px; border: 1px solid #ddd; border-radius: 11px; padding-left: 10px; color: #f05050; font-size: 12px; }
.chip i { width: 14px; height: 15px; border: 1.500px solid #f05050; border-radius: 2px; }
.dots { position: absolute; right: -2px; top: 4px; width: 21px; height: 21px; border-radius: 50%; background: #d8e6f2; display: flex; flex-direction: column; align-items: center; justify-content: center; gap: 2px; }
.dots i { width: 3px; height: 3px; border-radius: 50%; background: #888; }

.veh { padding-left: 13px; align-items: flex-start; }
.veh .check { margin-top: 24px; }
.veh-text { margin-left: 18px; width: 155px; padding-top: 6px; display: flex; flex-direction: column; line-height: 16px; }
.veh-text small { font-size: 10.800px; color: #aaa; white-space: nowrap; }
.veh-text .sub { color: #777; font-size: 11.500px; }
.veh-text strong { font-weight: 500; color: #555; font-size: 13px; line-height: 18px; }
.truck { width: 18px; height: 15px; fill: #999; flex: none; margin: 23px 0 0 -1px; }

.track { align-items: flex-start; padding: 17px 0 0 55px; background-image: linear-gradient(90deg, #f2f4f8 50%, transparent 50%); background-size: 108px 100%; background-position: 54px 0; }
.depot { height: 29px; flex: none; border: 1px solid #aaa; background: #fff; display: flex; align-items: center; justify-content: space-between; padding: 0 14px; color: #a4a4a4; font-size: 11.500px; font-weight: 500; border-radius: 1px; }
.depot svg { width: 18px; height: 24px; fill: #a0a0a0; flex: none; margin-top: 1px; }
.depot.only { justify-content: center; padding: 0; }
.stop { height: 27px; margin-top: 1px; flex: none; border: 1px solid #a4a4a4; border-radius: 3px; background: #fff; display: flex; align-items: center; justify-content: center; gap: 12px; color: #a0a0a0; font-size: 14px; }
.tick { width: 14px; height: 14px; background: #1e6cc4; border-radius: 2px; position: relative; }
.tick::after { content: ""; position: absolute; left: 4.500px; top: 1.500px; width: 4px; height: 8px; border: solid #fff; border-width: 0 1.700px 1.700px 0; transform: rotate(42deg); }
.link { flex: none; height: 3px; margin-top: 13px; }
.link.dash { background: repeating-linear-gradient(90deg, #a0a0a0 0 7px, transparent 7px 10px); }
.link.solid { background: #a0a0a0; }
.link.none { background: transparent; }

.vbar-tl { background: #ececec; }
.vbar-tl .up { border-bottom-color: #777; }
.vbar-tl .thumb { height: 12px; }
.hbar { height: 17px; flex: none; display: flex; align-items: center; background: #f1f1f1; padding-left: 5px; position: relative; }
.hbar .left, .hbar .right { width: 0; height: 0; border: 4px solid transparent; border-left-width: 0; border-right: 5px solid #909090; }
.hbar .thumb { width: 1385px; height: 13px; background: #c1c1c1; margin-left: 9px; }
.hbar .right { margin-left: 335px; border-right-width: 0; border-left: 5px solid #222; border-right-color: transparent; }

/* ---------- summary ---------- */
.summary { flex: 1; display: flex; align-items: flex-start; padding-top: 0; background: #fff; border-top: 1px solid #d2d2d2; margin-top: 14px; min-height: 0; position: relative; }
.stats { display: grid; grid-template-columns: 40px 73px 93px 76px 90px 92px 149px 129px 115px 138px 130px; padding: 6px 0 0 15px; font-size: 12px; line-height: 15px; width: 1353px; flex: none; }
.stats span { display: block; color: #666; white-space: nowrap; font-size: 11.300px; }
.stats b { display: block; font-weight: 400; color: #2a76d2; white-space: nowrap; }
.actions { display: flex; align-items: flex-start; gap: 6px; }
.split { margin-top: 3px; display: flex; width: 108px; height: 34px; border-radius: 3px; background: #1a6bc4; color: #fff; font-weight: 500; box-shadow: 0 1px 2px rgba(0,0,0,.4); overflow: hidden; }
.split-main { width: 71px; padding: 3px 0 0 17px; font-size: 13px; line-height: 14px; border-right: 1px solid #124a8e; }
.split-drop { flex: 1; display: flex; align-items: center; justify-content: center; background: #1664b8; }
.quick { margin-top: 6px; width: 105px; height: 29px; border: 0; border-radius: 3px; background: #1a6bc4; color: #fff; font-weight: 500; font-size: 13px; box-shadow: 0 1px 2px rgba(0,0,0,.4); }

.bottom-strip { height: 3px; display: flex; padding-left: 245px; background: #e9e5d8; }
.s-orange { width: 48px; background: #ffb26b; }
.s-white { width: 45px; background: #f6f6f2; }

/* ---------- overlays ---------- */
.mask { position: absolute; left: 0; top: 0; width: 1918px; height: 937px; background: rgba(0,0,0,.5); }
.lang { position: absolute; left: 27px; top: 898px; width: 119px; height: 39px; background: #fdc311; color: #222; font-size: 13px; display: flex; align-items: center; padding-left: 20px; gap: 9px; }
.lang i { width: 12px; height: 12px; border: 2px solid #111; border-radius: 50%; }
.feedback { position: absolute; left: 1886px; top: 419px; width: 32px; height: 99px; background: #d63c00; border-radius: 3px 0 0 3px; color: #fff; display: flex; flex-direction: column; align-items: center; padding-top: 9px; }
.feedback span { writing-mode: vertical-rl; transform: rotate(180deg); font-weight: 500; font-size: 13px; letter-spacing: .6px; }
.feedback svg { width: 17px; height: 17px; fill: #fff; margin-top: 9px; }

.modal { position: absolute; left: 420px; top: 299px; width: 1080px; height: 339px; background: #fff; border-radius: 4px; box-shadow: 0 0 30px rgba(0,0,0,.5); color: #444; }
.modal-head { height: 55px; display: flex; align-items: center; justify-content: space-between; padding: 0 22px 2px 15px; }
.modal-head h2 { font-size: 18.300px; font-weight: 400; color: #444; }
.modal-head svg { width: 12px; height: 12px; color: #333; margin-top: 1px; }
.fields { display: grid; grid-template-columns: repeat(4, 259px); grid-auto-rows: 55.500px; padding-left: 22px; }
.fields label { display: block; padding-top: 6px; font-size: 9.700px; line-height: 14px; color: #666; }
.fields p { margin-top: 4px; font-size: 13.300px; line-height: 18px; color: #555; }
.items { margin: 5.500px 0 0 22px; width: 1036px; border-collapse: collapse; table-layout: fixed; font-size: 12.500px; color: #444; }
.c1 { width: 69px; } .c2 { width: 147px; } .c3 { width: 151px; } .c4 { width: 150px; } .c5 { width: 191px; } .c6 { width: 159px; } .c7 { width: 93px; } .c8 { width: 76px; }
.items th { height: 30px; font-weight: 500; text-align: left; border-bottom: 1px solid #ddd; padding: 0; vertical-align: middle; color: #444; font-size: 13.200px; white-space: nowrap; }
.items td { height: 31px; border-bottom: 1px solid #ddd; padding: 0; font-size: 13px; }
.items sup { font-size: 9.500px; line-height: 0; margin-left: 3px; }
.items .idx { padding-left: 14px; }
.items .num { text-align: right; }
.items .last { padding-right: 15px; }
.modal-foot { display: flex; justify-content: flex-end; gap: 7px; padding: 15px 7px 0 0; }
.btn-cancel { width: 80px; height: 27px; border: 1px solid #bbb; border-radius: 3px; background: #fff; color: #999; font-size: 12.500px; font-weight: 500; padding: 0; }
.btn-export { width: 93px; height: 27px; border: 0; border-radius: 3px; background: #2f86f0; color: #fff; font-size: 12.500px; font-weight: 500; padding: 0; }
.notes { position: absolute; left: 0; top: 0; width: 1918px; height: 940px; pointer-events: none; }
```
